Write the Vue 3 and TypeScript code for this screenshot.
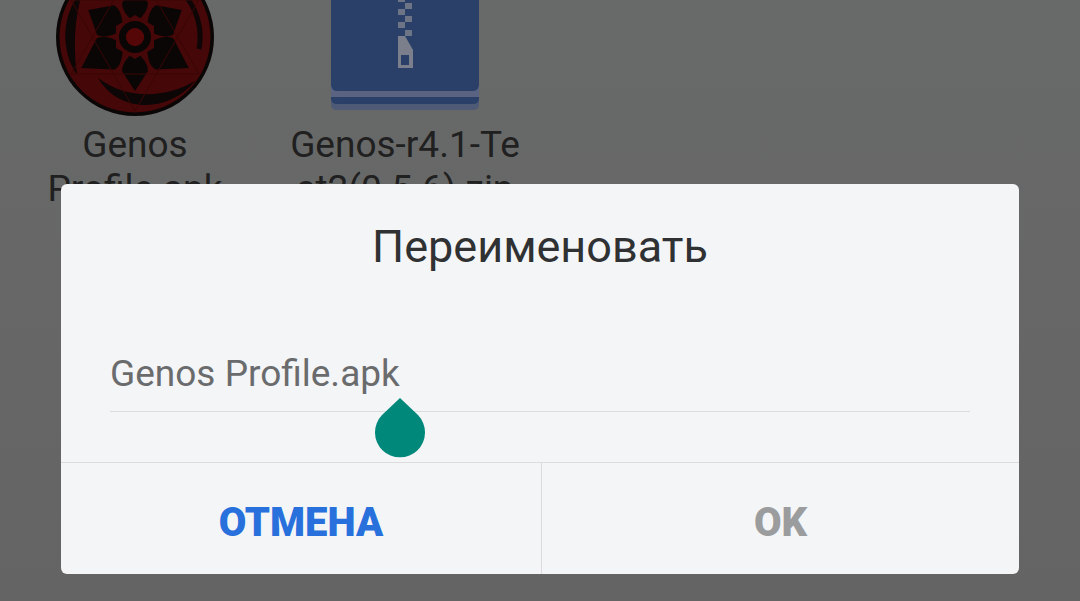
<template>
  <div class="screen">
    <div class="files">
      <div class="file">
        <svg class="file-icon" viewBox="-79 -81 158 160" width="158" height="160">
          <circle r="79" fill="#0a0606" />
          <circle r="75.5" fill="#450707" />
          <path d="M-52 -48 A71 71 0 0 0 -58 38 A200 200 0 0 1 -52 -48 Z" fill="#0c0606" />
          <path d="M-37 41 C-15 78 35 75 60 44 C30 62 -10 62 -37 41 Z" fill="#0c0606" />
          <path d="M48 -44 A65 65 0 0 1 64 12" fill="none" stroke="#0e0606" stroke-width="5" />
          <g fill="#0a0606">
            <path
              v-for="p in petals"
              :key="p.angle"
              :d="`M0 ${p.tip} L${p.half} 34 Q${p.half} 24 0 14 Q${-p.half} 24 ${-p.half} 34 Z`"
              :transform="`rotate(${p.angle})`"
            />
          </g>
          <g fill="none" stroke="#3a0606" stroke-width="1">
            <path d="M-64 37 L64 37 L0 -74 Z" />
            <path d="M-64 -37 L64 -37 L0 74 Z" />
          </g>
          <polygon points="0,-22 19,-11 19,11 0,22 -19,11 -19,-11" fill="#450707" />
          <circle r="12.5" fill="none" stroke="#0a0606" stroke-width="7" />
          <circle r="9" fill="#550707" />
        </svg>
        <div class="file-name">Genos Profile.apk</div>
      </div>
      <div class="file">
        <svg class="file-icon" viewBox="0 0 148 160" width="148" height="160">
          <path d="M0 4 H148 V148 Q148 154 142 154 H6 Q0 154 0 148 Z" fill="#4f5a76" />
          <path d="M0 4 H148 V142 Q148 148 142 148 H6 Q0 148 0 142 Z" fill="#2a4069" />
          <path d="M0 129 Q1 135 6 135 H142 Q147 135 148 129 V141 H0 Z" fill="#5a6482" />
          <g fill="#6d7485">
            <rect v-for="z in zipper" :key="z.y" :x="z.x" :y="z.y" width="7" height="6" />
          </g>
          <path d="M67 80 H74 L82 94 V112 H67 Z M70 99 V109 H78 V99 Z" fill="#7b7f8b" fill-rule="evenodd" />
        </svg>
        <div class="file-name zip">Genos-r4.1-Test2(0.5.6).zip</div>
      </div>
    </div>

    <div class="dialog">
      <div class="title">Переименовать</div>
      <div class="field">
        <span class="value">Genos Profile.apk</span>
        <svg class="handle" viewBox="0 0 50 60" width="50" height="60">
          <path d="M25 0 L7 17 A25 25 0 1 0 43 17 Z" fill="#00897b" />
        </svg>
      </div>
      <div class="actions">
        <button class="action cancel">ОТМЕНА</button>
        <button class="action ok">OK</button>
      </div>
    </div>
  </div>
</template>

<script setup lang="ts">
const petals = [
  { angle: 0, tip: 54, half: 13 },
  { angle: 60, tip: 62, half: 18 },
  { angle: 120, tip: 54, half: 17 },
  { angle: 180, tip: 54, half: 13 },
  { angle: 240, tip: 54, half: 17 },
  { angle: 300, tip: 62, half: 18 },
]

const zipper = [
  { x: 74, y: 33 },
  { x: 67, y: 40 },
  { x: 74, y: 47 },
  { x: 67, y: 53 },
  { x: 74, y: 60 },
  { x: 67, y: 66 },
  { x: 74, y: 74 },
]
</script>

<style>
html,
body {
  margin: 0;
  background: #656665;
}
</style>

<style scoped>
.screen {
  position: relative;
  width: 1080px;
  height: 601px;
  overflow: hidden;
  background: linear-gradient(#686a69, #636463);
  font-family: Roboto, sans-serif;
}

.files {
  display: flex;
  margin-top: -44px;
}

.file {
  width: 270px;
  display: flex;
  flex-direction: column;
  align-items: center;
}

.file-icon {
  display: block;
}

.file-name {
  width: 238px;
  margin-top: 7px;
  font-size: 37px;
  line-height: 44px;
  text-align: center;
  color: #1f201f;
}

.zip {
  word-break: break-all;
}

.dialog {
  position: absolute;
  left: 61px;
  top: 184px;
  width: 958px;
  height: 390px;
  display: flex;
  flex-direction: column;
  border-radius: 6px;
  background: #f4f5f7;
}

.title {
  padding-top: 38px;
  font-size: 45px;
  line-height: 50px;
  text-align: center;
  color: #2f3133;
}

.field {
  position: relative;
  margin: 79px 49px 0;
  height: 60px;
  border-bottom: 1px solid #dcdcde;
}

.value {
  font-size: 37px;
  line-height: 46px;
  color: #6a6b6d;
}

.handle {
  position: absolute;
  left: 265px;
  top: 47px;
}

.actions {
  display: flex;
  margin-top: auto;
  height: 111px;
  border-top: 1px solid #dcdcde;
}

.action {
  flex: 1;
  padding: 8px 0 0;
  border: 0;
  background: none;
  font-family: Roboto, sans-serif;
  font-size: 40px;
  font-weight: 900;
}

.cancel {
  flex: 0 0 481px;
  color: #2870dc;
  border-right: 1px solid #dcdcde;
}

.ok {
  color: #9b9c9e;
}
</style>
